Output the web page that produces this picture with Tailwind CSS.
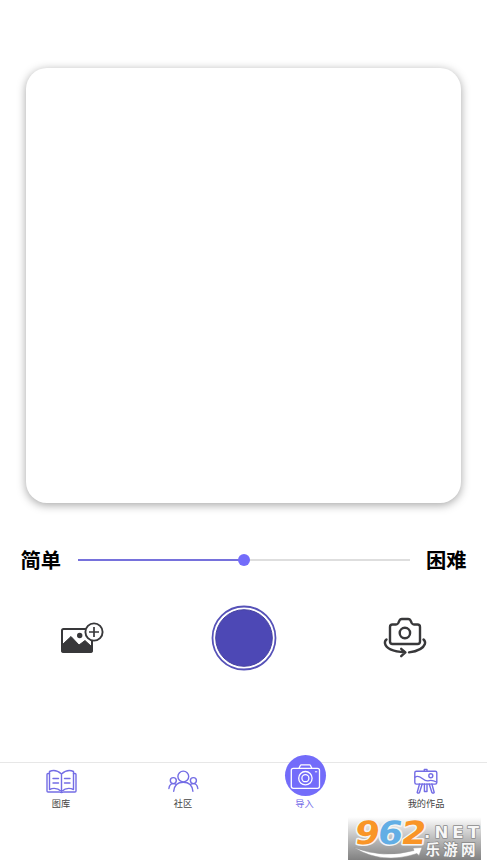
<!DOCTYPE html>
<html lang="zh-CN">
<head>
<meta charset="utf-8">
<title>导入</title>
<script src="https://cdn.jsdelivr.net/npm/@tailwindcss/browser@4"></script>
</head>
<body class="bg-white font-['Noto_Sans_CJK_SC',sans-serif]">
<div class="relative flex h-[866px] w-[487px] flex-col overflow-hidden bg-white">
  <main class="flex h-[762px] flex-col pt-[68px]">
    <section class="mx-[26px] h-[435px] shrink-0 rounded-[21px] bg-white shadow-[0_2px_10px_rgba(0,0,0,0.36)]"></section>

    <div class="mt-[42px] flex h-[30px] items-center pl-[20.500px] pr-[20.500px] text-[20.300px] leading-[30px] font-bold text-black">
      <span class="relative -top-px w-[57px] whitespace-nowrap">简单</span>
      <div class="relative flex h-[12px] flex-1 items-center">
        <div class="h-[2px] w-1/2 bg-[#7671dc]"></div>
        <div class="h-[2px] w-1/2 bg-[#dedede]"></div>
        <div class="absolute left-1/2 top-0 size-[12px] -translate-x-1/2 rounded-full bg-[#736cfa]"></div>
      </div>
      <span class="relative -top-px ml-[16px] whitespace-nowrap">困难</span>
    </div>

    <div class="mt-[27px] flex h-[72px] items-center justify-between pl-[58px] pr-[58px]">
      <svg class="h-[46px] w-[48px]" viewBox="58 615 48 46" fill="none" stroke="#38383a" stroke-width="2" stroke-linejoin="round">
        <path d="M86 629H63.500Q62 629 62 630.500V650.500Q62 652 63.500 652H90.500Q92 652 92 650.500V639"/>
        <path d="M62 645L71 636.500L79 645L85 640.500L92 647V652H62Z" fill="#38383a" stroke-width="1"/>
        <circle cx="79.700" cy="635.500" r="2.700" fill="#38383a" stroke="none"/>
        <circle cx="94" cy="632" r="8.600" fill="#fff" stroke-width="1.900"/>
        <path d="M94 627V637M89 632H99" stroke-width="1.700"/>
      </svg>
      <svg class="size-[66px]" viewBox="0 0 66 66">
        <circle cx="33" cy="33" r="31.500" fill="#fff" stroke="#5652b8" stroke-width="1.800"/>
        <circle cx="33" cy="33" r="28.300" fill="#4d48b5" stroke="#4541a2" stroke-width="1"/>
      </svg>
      <svg class="h-[48px] w-[48px]" viewBox="381 614 48 48" fill="none" stroke="#38383a" stroke-width="2.400" stroke-linecap="round" stroke-linejoin="round">
        <path d="M392.500 624.500H396Q397.500 624.500 398.300 623L399.600 620.300Q400.200 619 401.800 619H408.200Q409.800 619 410.400 620.300L411.700 623Q412.500 624.500 414 624.500H417.500Q420 624.500 420 627V641.500Q420 644 417.500 644H392.500Q390 644 390 641.500V627Q390 624.500 392.500 624.500Z"/>
        <circle cx="404.900" cy="633" r="5.200"/>
        <path d="M386.500 639.500Q384.500 641 385 643.500Q386.500 651 405 652.300M401.200 648.800L405.400 652.400L401.200 656.200M423.500 639.500Q425.700 641.500 424.900 644Q422.500 650.700 409 652.400"/>
      </svg>
    </div>
  </main>

  <nav class="grid h-[104px] shrink-0 grid-cols-[122px_122px_121px_122px] border-t border-[#e7e7e7] text-center text-[9.200px] leading-[14px] text-[#444]">
    <div class="flex flex-col items-center pt-[4px]">
      <svg class="h-[29px] w-[34px]" viewBox="44 767 34 29" fill="none" stroke="#746de5" stroke-width="1.400" stroke-linecap="round" stroke-linejoin="round">
        <path d="M61.500 774Q55.500 768.500 49.500 771.500V789.500Q56 786.500 61.500 791.500Q67 786.500 73.500 789.500V771.500Q67.500 768.500 61.500 774ZM61.500 774V791.500"/>
        <path d="M49.500 773.500H48Q47 773.500 47 774.500V791Q47 792 48 792H59.500Q61.500 793.300 63.500 792H75Q76 792 76 791V774.500Q76 773.500 75 773.500H73.500"/>
        <path d="M53 778.500H58.500M53 783H58.500M64.500 778.500H70M64.500 783H70"/>
      </svg>
      <span class="whitespace-nowrap">图库</span>
    </div>
    <div class="flex flex-col items-center pt-[4px]">
      <svg class="h-[29px] w-[34px]" viewBox="166 767 34 29" fill="none" stroke="#746de5" stroke-width="1.400" stroke-linecap="round">
        <circle cx="183.300" cy="776.500" r="5.400"/>
        <circle cx="173.300" cy="780.600" r="3"/>
        <circle cx="193.400" cy="780.600" r="3"/>
        <path d="M173.700 791.300Q174.500 782.200 183.300 782.200Q192.100 782.200 192.900 791.300M168.900 788.500Q169.500 783.600 173.300 783.600Q175.300 783.600 176.500 784.700M197.800 788.500Q197.200 783.600 193.400 783.600Q191.400 783.600 190.200 784.700"/>
      </svg>
      <span class="whitespace-nowrap">社区</span>
    </div>
    <div class="flex flex-col items-center text-[#746de8]">
      <div class="-mt-[8px] ml-px size-[41px] rounded-full bg-[#736cfa]">
        <svg class="size-[41px]" viewBox="284.500 755 41 41" fill="none" stroke="#fff" stroke-width="1.300" stroke-linejoin="round">
          <rect x="290.800" y="768.300" width="28.200" height="20" rx="2"/>
          <path d="M298.500 768.300L299.800 765.500Q300.100 764.900 300.800 764.900H309Q309.700 764.900 310 765.500L311.300 768.300"/>
          <circle cx="304.900" cy="778.200" r="6.700"/>
          <circle cx="304.900" cy="778.200" r="3.500"/>
          <path d="M314.800 771.800H316.300" stroke-width="1" stroke-linecap="round"/>
        </svg>
      </div>
      <span class="whitespace-nowrap">导入</span>
    </div>
    <div class="flex flex-col items-center pt-[4px]">
      <svg class="h-[29px] w-[34px]" viewBox="409 767 34 29" fill="none" stroke="#746de5" stroke-width="1.400" stroke-linecap="round" stroke-linejoin="round">
        <rect x="414.800" y="771.300" width="22" height="12.800" rx="1.500"/>
        <path d="M424.300 770.900V769.400H427V770.900M415 777.200C420 773.500 423 781.500 428 780.800Q432 779.500 436.500 782M419.500 784L417.200 792.500Q418.300 793.800 419.500 792.500L422.200 784M424.400 784V791.500H427V784M429.200 784L431.900 792.500Q433.100 793.800 434.200 792.500L431.900 784"/>
        <circle cx="430.800" cy="775.700" r="2"/>
      </svg>
      <span class="whitespace-nowrap">我的作品</span>
    </div>
  </nav>

  <div class="absolute left-[348px] top-[817px] h-[43px] w-[133px] bg-linear-to-b from-white via-[#bdbdbd] to-[#818181]">
    <svg class="h-[43px] w-[133px] overflow-visible" viewBox="0 0 133 43">
      <g font-family="DejaVu Sans, sans-serif" font-weight="bold" paint-order="stroke" stroke-linejoin="round">
        <g font-size="32" stroke="#f4f4f4" stroke-width="3" transform="translate(5.500 27) skewX(-8)">
          <text x="0" y="0" fill="#f99527" textLength="25" lengthAdjust="spacingAndGlyphs">9</text>
          <text x="23" y="0" fill="#62aee5" textLength="25" lengthAdjust="spacingAndGlyphs">6</text>
          <text x="46.500" y="0" fill="#f99527" textLength="25" lengthAdjust="spacingAndGlyphs">2</text>
        </g>
        <text x="76" y="20.500" font-size="16.500" fill="#f7f7f7" stroke="#8a8a8a" stroke-width="1.600" textLength="55" lengthAdjust="spacing">.NET</text>
      </g>
      <path d="M6 30.500Q35 42 66 33.500L65 31L74 30.500L71 38.500L69 36.500Q34 48 6 30.500Z" fill="#fff" stroke="#999" stroke-width=".5"/>
      <text x="77.500" y="38" font-family="Noto Sans CJK SC, sans-serif" font-weight="bold" font-size="14.500" fill="#f7f7f7" stroke="#888" stroke-width="1.400" paint-order="stroke" textLength="50" lengthAdjust="spacing">乐游网</text>
    </svg>
  </div>
</div>
</body>
</html>
